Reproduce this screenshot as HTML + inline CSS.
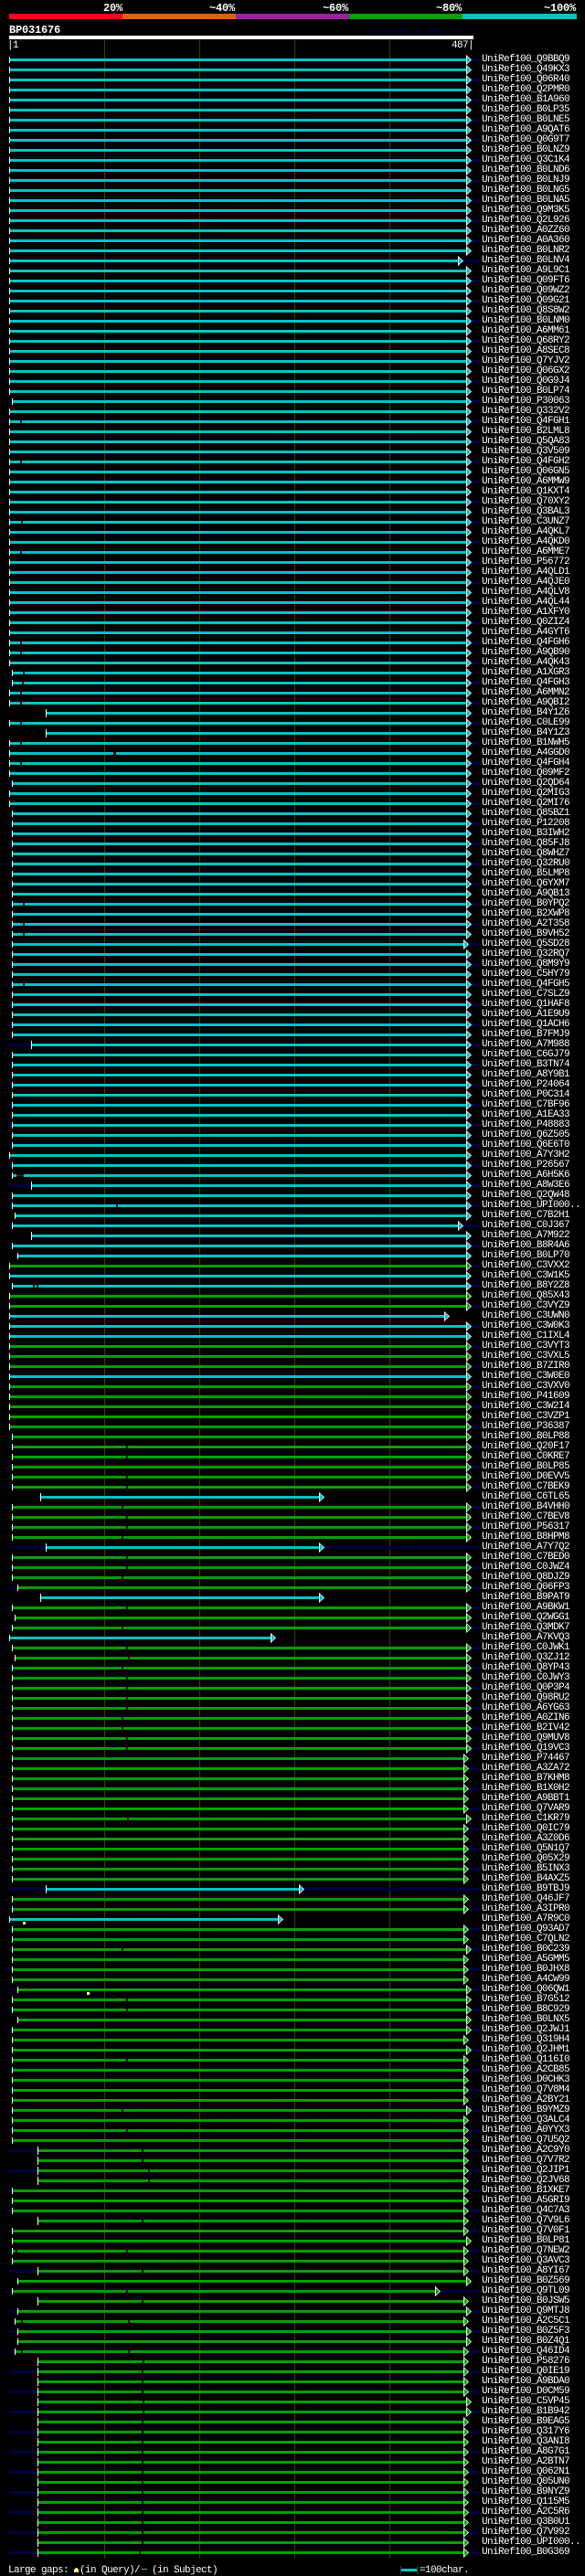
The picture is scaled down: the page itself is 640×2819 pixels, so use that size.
<!DOCTYPE html>
<html><head><meta charset="utf-8"><title>BP031676</title>
<style>
html,body{margin:0;padding:0;background:#000;width:640px;height:2819px;overflow:hidden}
body{position:relative;font-family:"Liberation Mono",monospace;color:#fff}
.t{position:absolute;font-size:11px;line-height:11px;letter-spacing:-.6px;white-space:pre}
.h{position:absolute;font-size:12px;line-height:12px;font-weight:bold;letter-spacing:-.2px;white-space:pre}
.k{position:absolute;top:15px;height:6px}
.v{position:absolute;top:44px;width:1px;height:2756px;background:#404000}
#r{position:absolute;left:0;top:60px;width:640px}
p{position:relative;margin:0;height:11px;padding-left:527px;box-sizing:border-box;font-size:11px;line-height:11px;letter-spacing:-.6px;white-space:pre;--c:#00a000;--s:10px;--e:510px;--t:2px;--h:7px}
p:nth-child(odd){background:linear-gradient(#000040,#000040) no-repeat 10px 4px/516px 3px}
p::before{content:"";position:absolute;top:0;height:11px;left:var(--s);width:calc(var(--e) - var(--s));background:linear-gradient(#fff,#fff) no-repeat 0 var(--t)/1px var(--h),linear-gradient(var(--c),var(--c)) no-repeat 0 4px/100% 3px}
p::after{content:"";position:absolute;top:0;left:var(--e);width:6px;height:11px;background:linear-gradient(90deg,#fff 1px,transparent 1px),conic-gradient(from 227.5deg at 4.8px 5.5px,var(--c) 85deg,#fff 0);clip-path:polygon(0 0,100% 50%,0 100%)}
.b{--c:#00c4c4}
.s13{--s:13px}.s16{--s:16px}.s19{--s:19px}
.s34{--s:34px;--t:1px;--h:9px}.s41{--s:41px;--t:1px;--h:9px}.s44{--s:44px;--t:1px;--h:9px}.s50{--s:50px;--t:1px;--h:9px}
.e507{--e:507px}.e501{--e:501px}.e486{--e:486px}.e476{--e:476px}.e349{--e:349px}.e327{--e:327px}.e304{--e:304px}.e296{--e:296px}
i{position:absolute;top:4px;width:2px;height:3px;background:#000;z-index:2}
u{position:absolute;width:3px;height:3px;background:#ffff80;z-index:2}
</style></head><body>
<div class="h" style="left:113px;top:3px">20%</div>
<div class="h" style="left:229px;top:3px">~40%</div>
<div class="h" style="left:353px;top:3px">~60%</div>
<div class="h" style="left:477px;top:3px">~80%</div>
<div class="h" style="left:595px;top:3px">~100%</div>
<div class="k" style="left:10px;width:124px;background:#ff0020"></div>
<div class="k" style="left:134px;width:124px;background:#e06000"></div>
<div class="k" style="left:258px;width:124px;background:#a020a0"></div>
<div class="k" style="left:382px;width:124px;background:#00a000"></div>
<div class="k" style="left:506px;width:125px;background:#00c4c4"></div>
<div class="h" style="left:10px;top:27px">BP031676</div>
<div style="position:absolute;left:402px;top:31px;font-size:8px;line-height:8px;letter-spacing:.2px;color:#000050;white-space:pre">AlignView.pm Beta rel.7</div>
<div style="position:absolute;left:10px;top:39px;width:508px;height:4px;background:#fff"></div>
<div class="t" style="left:8px;top:45px">|1</div>
<div class="t" style="left:494px;top:45px">487|</div>
<div class="v" style="left:114px"></div><div class="v" style="left:218px"></div><div class="v" style="left:322px"></div><div class="v" style="left:426px"></div>
<div id="r"><p class="b">UniRef100_Q9BBQ9</p><p class="b">UniRef100_Q49KX3</p><p class="b">UniRef100_Q06R40</p><p class="b">UniRef100_Q2PMR0</p><p class="b">UniRef100_B1A960</p><p class="b">UniRef100_B0LP35</p><p class="b">UniRef100_B0LNE5</p><p class="b">UniRef100_A9QAT6</p><p class="b">UniRef100_Q0G9T7</p><p class="b">UniRef100_B0LNZ9</p>
<p class="b">UniRef100_Q3C1K4</p><p class="b">UniRef100_B0LND6</p><p class="b">UniRef100_B0LNJ9</p><p class="b">UniRef100_B0LNG5</p><p class="b">UniRef100_B0LNA5</p><p class="b">UniRef100_Q9M3K5</p><p class="b">UniRef100_Q2L926</p><p class="b">UniRef100_A0ZZ60</p><p class="b">UniRef100_A0A360</p><p class="b">UniRef100_B0LNR2</p>
<p class="b e501">UniRef100_B0LNV4</p><p class="b">UniRef100_A9L9C1</p><p class="b">UniRef100_Q09FT6</p><p class="b">UniRef100_Q09WZ2</p><p class="b">UniRef100_Q09G21</p><p class="b">UniRef100_Q8S8W2</p><p class="b">UniRef100_B0LNM0</p><p class="b">UniRef100_A6MM61</p><p class="b">UniRef100_Q68RY2</p><p class="b">UniRef100_A8SEC8</p>
<p class="b">UniRef100_Q7YJV2</p><p class="b">UniRef100_Q06GX2</p><p class="b">UniRef100_Q0G9J4</p><p class="b">UniRef100_B0LP74</p><p class="b s13">UniRef100_P30063</p><p class="b">UniRef100_Q332V2</p><p class="b"><i style="left:22px"></i>UniRef100_Q4FGH1</p><p class="b">UniRef100_B2LML8</p><p class="b">UniRef100_Q5QA83</p><p class="b">UniRef100_Q3V509</p>
<p class="b"><i style="left:22px"></i>UniRef100_Q4FGH2</p><p class="b">UniRef100_Q06GN5</p><p class="b">UniRef100_A6MMW9</p><p class="b">UniRef100_Q1KXT4</p><p class="b">UniRef100_Q70XY2</p><p class="b">UniRef100_Q3BAL3</p><p class="b"><i style="left:23px"></i>UniRef100_C3UNZ7</p><p class="b">UniRef100_A4QKL7</p><p class="b">UniRef100_A4QKD0</p><p class="b"><i style="left:22px"></i>UniRef100_A6MME7</p>
<p class="b">UniRef100_P56772</p><p class="b">UniRef100_A4QLD1</p><p class="b">UniRef100_A4QJE0</p><p class="b">UniRef100_A4QLV8</p><p class="b">UniRef100_A4QL44</p><p class="b">UniRef100_A1XFY0</p><p class="b">UniRef100_Q0ZIZ4</p><p class="b">UniRef100_A4GYT6</p><p class="b"><i style="left:22px"></i>UniRef100_Q4FGH6</p><p class="b"><i style="left:22px"></i>UniRef100_A9QB90</p>
<p class="b">UniRef100_A4QK43</p><p class="b s13"><i style="left:25px"></i>UniRef100_A1XGR3</p><p class="b s13"><i style="left:24px"></i>UniRef100_Q4FGH3</p><p class="b"><i style="left:22px"></i>UniRef100_A6MMN2</p><p class="b"><i style="left:22px"></i>UniRef100_A9QBI2</p><p class="b s50">UniRef100_B4Y1Z6</p><p class="b"><i style="left:22px"></i>UniRef100_C0LE99</p><p class="b s50">UniRef100_B4Y1Z3</p><p class="b"><i style="left:22px"></i>UniRef100_B1NWH5</p><p class="b"><i style="left:124px;width:3px"></i>UniRef100_A4GGD0</p>
<p class="b"><i style="left:22px"></i>UniRef100_Q4FGH4</p><p class="b">UniRef100_Q09MF2</p><p class="b s13">UniRef100_Q2QD64</p><p class="b">UniRef100_Q2MIG3</p><p class="b">UniRef100_Q2MI76</p><p class="b s13">UniRef100_Q85BZ1</p><p class="b s13">UniRef100_P12208</p><p class="b s13">UniRef100_B3IWH2</p><p class="b s13">UniRef100_Q85FJ8</p><p class="b s13">UniRef100_Q8WHZ7</p>
<p class="b s13">UniRef100_Q32RU0</p><p class="b s13">UniRef100_B5LMP8</p><p class="b s13">UniRef100_Q6YXM7</p><p class="b s13">UniRef100_A9QB13</p><p class="b s13"><i style="left:25px"></i>UniRef100_B0YPQ2</p><p class="b s13">UniRef100_B2XWP8</p><p class="b s13"><i style="left:25px"></i>UniRef100_A2T358</p><p class="b s13"><i style="left:25px"></i>UniRef100_B9VH52</p><p class="b s13 e507">UniRef100_Q5SD28</p><p class="b s13">UniRef100_Q32RQ7</p>
<p class="b s13">UniRef100_Q8M9Y9</p><p class="b s13">UniRef100_C5HY79</p><p class="b s13"><i style="left:25px"></i>UniRef100_Q4FGH5</p><p class="b s13">UniRef100_C7SLZ9</p><p class="b s13">UniRef100_Q1HAF8</p><p class="b s13">UniRef100_A1E9U9</p><p class="b s13">UniRef100_Q1ACH6</p><p class="b s13">UniRef100_B7FMJ9</p><p class="b s34">UniRef100_A7M988</p><p class="b s13">UniRef100_C6GJ79</p>
<p class="b s13">UniRef100_B3TN74</p><p class="b s13">UniRef100_A8Y9B1</p><p class="b s13">UniRef100_P24064</p><p class="b s13">UniRef100_P0C314</p><p class="b s13">UniRef100_C7BF96</p><p class="b s13">UniRef100_A1EA33</p><p class="b s13">UniRef100_P48883</p><p class="b s13">UniRef100_Q6Z505</p><p class="b s13">UniRef100_Q6E6T0</p><p class="b">UniRef100_A7Y3H2</p>
<p class="b s13">UniRef100_P26567</p><p class="b s13"><i style="left:18px;width:8px;top:5px;height:1px;background:#004060"></i><i style="left:18px;width:8px;top:4px;height:1px"></i><i style="left:18px;width:8px;top:6px;height:1px"></i>UniRef100_A6H5K6</p><p class="b s34">UniRef100_A8W3E6</p><p class="b s13">UniRef100_Q2QW48</p><p class="b s13"><i style="left:127px"></i>UniRef100_UPI000..</p><p class="b s16">UniRef100_C7B2H1</p><p class="b s13 e501">UniRef100_C0J367</p><p class="b s34">UniRef100_A7M922</p><p class="b s13">UniRef100_B8R4A6</p><p class="b s19">UniRef100_B0LP70</p>
<p>UniRef100_C3VXX2</p><p class="b">UniRef100_C3W1K5</p><p class="b s13"><i style="left:36px"></i><i style="left:40px"></i>UniRef100_B8Y2Z8</p><p>UniRef100_Q85X43</p><p>UniRef100_C3VYZ9</p><p class="b e486">UniRef100_C3UWN0</p><p class="b">UniRef100_C3W0K3</p><p class="b">UniRef100_C1IXL4</p><p>UniRef100_C3VYT3</p><p>UniRef100_C3VXL5</p>
<p>UniRef100_B7ZIR0</p><p class="b">UniRef100_C3W0E0</p><p>UniRef100_C3VXV0</p><p>UniRef100_P41609</p><p>UniRef100_C3W2I4</p><p>UniRef100_C3VZP1</p><p>UniRef100_P36387</p><p class="s13">UniRef100_B0LP88</p><p class="s13"><i style="left:138px"></i>UniRef100_Q20F17</p><p class="s13"><i style="left:138px"></i>UniRef100_C0KRE7</p>
<p class="s13">UniRef100_B0LP85</p><p class="s13"><i style="left:138px"></i>UniRef100_D0EVV5</p><p class="s13"><i style="left:138px"></i>UniRef100_C7BEK9</p><p class="b s44 e349">UniRef100_C6TL65</p><p class="s13"><i style="left:133px"></i>UniRef100_B4VHH0</p><p class="s13"><i style="left:138px"></i>UniRef100_C7BEV8</p><p class="s13"><i style="left:138px"></i>UniRef100_P56317</p><p class="s13"><i style="left:133px"></i>UniRef100_B8HPM8</p><p class="b s50 e349">UniRef100_A7Y7Q2</p><p class="s13"><i style="left:138px"></i>UniRef100_C7BED0</p>
<p class="s13"><i style="left:138px"></i>UniRef100_C0JWZ4</p><p class="s13"><i style="left:133px"></i>UniRef100_Q8DJZ9</p><p class="s19">UniRef100_Q06FP3</p><p class="b s44 e349">UniRef100_B9PAT9</p><p class="s13"><i style="left:138px"></i>UniRef100_A9BKW1</p><p class="s16">UniRef100_Q2WGG1</p><p class="s13"><i style="left:133px"></i>UniRef100_Q3MDK7</p><p class="b e296">UniRef100_A7KVQ3</p><p class="s13"><i style="left:138px"></i>UniRef100_C0JWK1</p><p class="s16"><i style="left:140px"></i>UniRef100_Q3ZJ12</p>
<p class="s13"><i style="left:133px"></i>UniRef100_Q8YP43</p><p class="s13"><i style="left:138px"></i>UniRef100_C0JWY3</p><p class="s13"><i style="left:138px"></i>UniRef100_Q0P3P4</p><p class="s13"><i style="left:138px"></i>UniRef100_Q98RU2</p><p class="s13"><i style="left:138px"></i>UniRef100_A6YG63</p><p class="s13"><i style="left:133px"></i>UniRef100_A0ZIN6</p><p class="s13"><i style="left:133px"></i>UniRef100_B2IV42</p><p class="s13"><i style="left:138px"></i>UniRef100_Q9MUV8</p><p class="s13"><i style="left:138px"></i>UniRef100_Q19VC3</p><p class="s13 e507">UniRef100_P74467</p>
<p class="s13 e507">UniRef100_A3ZA72</p><p class="s13 e507">UniRef100_B7KHM8</p><p class="s13 e507">UniRef100_B1X0H2</p><p class="s13 e507">UniRef100_A9BBT1</p><p class="s13 e507">UniRef100_Q7VAR9</p><p class="s13"><i style="left:139px"></i>UniRef100_C1KR79</p><p class="s13 e507">UniRef100_Q0IC79</p><p class="s13 e507">UniRef100_A3Z0D6</p><p class="s13 e507">UniRef100_Q5N1Q7</p><p class="s13 e507">UniRef100_Q05X29</p>
<p class="s13 e507">UniRef100_B5INX3</p><p class="s13 e507">UniRef100_B4AXZ5</p><p class="b s50 e327">UniRef100_B9TBJ9</p><p class="s13 e507">UniRef100_Q46JF7</p><p class="s13 e507">UniRef100_A3IPR0</p><p class="b e304"><u style="left:25px;top:8px"></u>UniRef100_A7R9C0</p><p class="s13 e507">UniRef100_Q93AD7</p><p class="s13 e507">UniRef100_C7QLN2</p><p class="s13"><i style="left:133px"></i>UniRef100_B0C239</p><p class="s13 e507">UniRef100_A5GMM5</p>
<p class="s13 e507">UniRef100_B0JHX8</p><p class="s13 e507">UniRef100_A4CW99</p><p class="s19"><u style="left:95px;top:8px"></u>UniRef100_Q06QW1</p><p class="s13"><i style="left:138px"></i>UniRef100_B7G512</p><p class="s13"><i style="left:138px"></i>UniRef100_B8C929</p><p class="s19">UniRef100_B0LNX5</p><p class="s13">UniRef100_Q2JWJ1</p><p class="s13 e507">UniRef100_Q319H4</p><p class="s13">UniRef100_Q2JHM1</p><p class="s13 e507"><i style="left:138px"></i>UniRef100_Q116I0</p>
<p class="s13 e507">UniRef100_A2CB85</p><p class="s13 e507">UniRef100_D0CHK3</p><p class="s13 e507">UniRef100_Q7V8M4</p><p class="s13 e507">UniRef100_A2BY21</p><p class="s13"><i style="left:133px"></i>UniRef100_B9YMZ9</p><p class="s13 e507">UniRef100_Q3ALC4</p><p class="s13 e507"><i style="left:138px"></i>UniRef100_A0YYX3</p><p class="s13 e507">UniRef100_Q7U5Q2</p><p class="s41 e507"><i style="left:155px"></i>UniRef100_A2C9Y0</p><p class="s41 e507"><i style="left:155px"></i>UniRef100_Q7V7R2</p>
<p class="s41 e507"><i style="left:162px"></i>UniRef100_Q2JIP1</p><p class="s41 e507"><i style="left:162px"></i>UniRef100_Q2JV68</p><p class="s13 e507">UniRef100_B1XKE7</p><p class="s13 e507">UniRef100_A5GRI9</p><p class="s13 e507">UniRef100_Q4C7A3</p><p class="s41 e507"><i style="left:155px"></i>UniRef100_Q7V9L6</p><p class="s13 e507">UniRef100_Q7V0F1</p><p class="s13">UniRef100_B0LP81</p><p class="s13 e507"><i style="left:17px"></i><i style="left:138px"></i>UniRef100_Q7NEW2</p><p class="s13 e507">UniRef100_Q3AVC3</p>
<p class="s41 e507"><i style="left:155px"></i>UniRef100_A8YI67</p><p class="s19">UniRef100_B0Z569</p><p class="s13 e476"><i style="left:138px"></i>UniRef100_Q9TL09</p><p class="s41 e507"><i style="left:155px"></i>UniRef100_B0JSW5</p><p class="s19">UniRef100_Q9MTJ8</p><p class="s16 e507"><i style="left:23px"></i><i style="left:140px"></i>UniRef100_A2C5C1</p><p class="s19">UniRef100_B0Z5F3</p><p class="s19">UniRef100_B0Z4Q1</p><p class="s16 e507"><i style="left:23px"></i><i style="left:140px"></i>UniRef100_Q46ID4</p><p class="s41 e507"><i style="left:156px"></i>UniRef100_P58276</p>
<p class="s41 e507"><i style="left:155px"></i>UniRef100_Q0IE19</p><p class="s41 e507"><i style="left:155px"></i>UniRef100_A9BDA0</p><p class="s41 e507"><i style="left:155px"></i>UniRef100_D0CM59</p><p class="s41"><i style="left:156px"></i>UniRef100_C5VP45</p><p class="s41"><i style="left:156px"></i>UniRef100_B1B942</p><p class="s41 e507"><i style="left:155px"></i>UniRef100_B9EAG5</p><p class="s41 e507"><i style="left:155px"></i>UniRef100_Q317Y6</p><p class="s41 e507"><i style="left:155px"></i>UniRef100_Q3ANI8</p><p class="s41 e507"><i style="left:155px"></i>UniRef100_A8G7G1</p><p class="s41 e507"><i style="left:155px"></i>UniRef100_A2BTN7</p>
<p class="s41 e507"><i style="left:155px"></i>UniRef100_Q062N1</p><p class="s41 e507"><i style="left:155px"></i>UniRef100_Q05UN0</p><p class="s41 e507"><i style="left:155px"></i>UniRef100_B9NYZ9</p><p class="s41 e507"><i style="left:155px"></i>UniRef100_Q115M5</p><p class="s41 e507"><i style="left:155px"></i>UniRef100_A2C5R6</p><p class="s41 e507"><i style="left:155px"></i>UniRef100_Q3B0U1</p><p class="s41 e507"><i style="left:155px"></i>UniRef100_Q7V992</p><p class="s41 e507"><i style="left:155px"></i>UniRef100_UPI000..</p><p class="s41 e507"><i style="left:152px"></i>UniRef100_B0G369</p></div>
<div class="t" style="left:9px;top:2808px">Large gaps:</div>
<div style="position:absolute;left:81px;top:2810px;width:5px;height:5px;background:#ffff80;clip-path:polygon(40% 0,60% 0,100% 40%,100% 100%,0 100%,0 40%)"></div>
<div class="t" style="left:87px;top:2808px">(in Query)/</div>
<div style="position:absolute;left:155px;top:2811px;width:6px;height:1px;background:#00c4c4"></div>
<div class="t" style="left:166px;top:2808px">(in Subject)</div>
<div style="position:absolute;left:439px;top:2811px;width:17px;height:3px;background:#00c4c4"></div>
<div style="position:absolute;left:438px;top:2808px;width:1px;height:9px;background:#404040"></div>
<div style="position:absolute;left:456px;top:2808px;width:1px;height:9px;background:#404040"></div>
<div class="t" style="left:459px;top:2808px">=100char.</div>
</body></html>
